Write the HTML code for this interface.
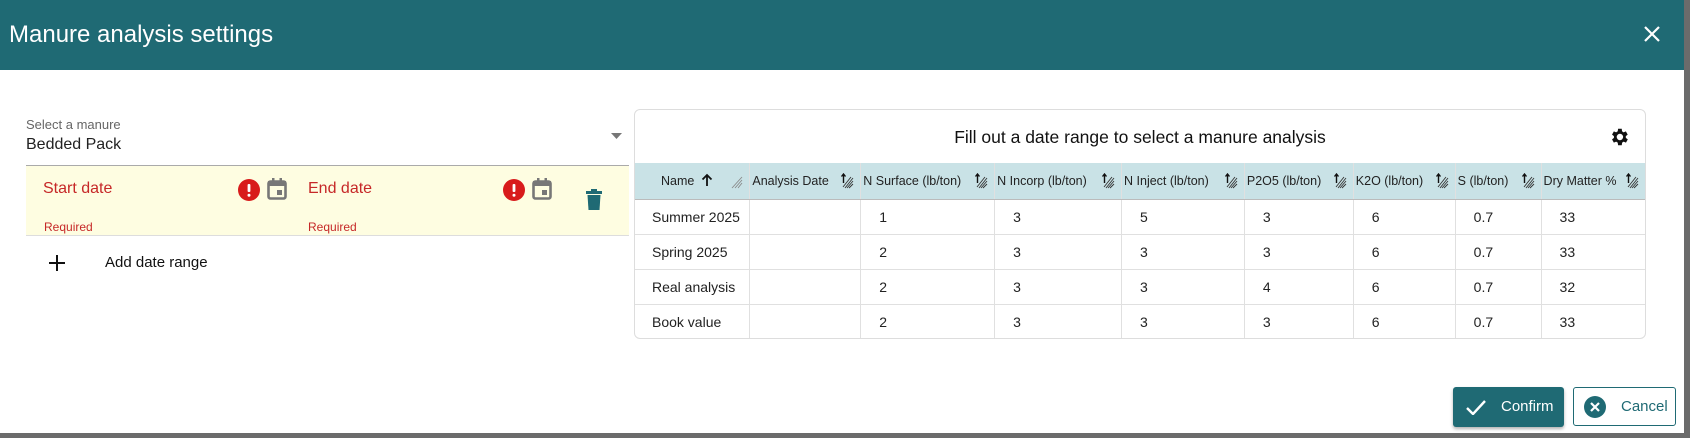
<!DOCTYPE html>
<html><head><style>
*{box-sizing:border-box;margin:0;padding:0}
body{width:1690px;height:438px;background:#6b6b6b;font-family:"Liberation Sans",Arial,sans-serif;position:relative;overflow:hidden}
.dlg{position:absolute;left:0;top:0;width:1684px;height:433px;background:#fff}
.hdr{position:absolute;left:0;top:0;width:1684px;height:70px;background:#1f6a74;color:#fff}
.hdr .t{position:absolute;left:9px;top:21px;font-size:24px}
.abs{position:absolute}
.card{position:absolute;left:634px;top:109px;width:1012px;height:230px;border:1px solid #ddd;border-radius:6px;overflow:hidden}
table{position:absolute;left:0;top:53px;border-collapse:collapse;font-size:14px;color:#222;table-layout:fixed}
th{background:#c9e2e6;height:36px;font-weight:normal;font-size:12.5px;text-align:left;padding-left:2px;border-left:1px solid #e0e0e0;border-bottom:1px solid #bbb;white-space:nowrap;position:relative;vertical-align:middle}
td{height:35px;border-left:1px solid #e0e0e0;border-bottom:1px solid #e0e0e0;padding-left:18px}
th:first-child,td:first-child{border-left:none}
td:first-child{padding-left:17px}
tr:last-child td{border-bottom:none}
.si{position:absolute;right:6px;top:10px;width:14px;height:16px}
</style></head><body>
<svg width="0" height="0" style="position:absolute"><defs>
<g id="srt"><path d="M3.5 1V10M1.5 3.5L3.5 1L5.5 3.5" stroke="#111" stroke-width="1.4" fill="none"/><path d="M5 15L13 5M7 15L13 8M9 15L13 11M3 14L11 4" stroke="#333" stroke-width="0.9"/></g>
<g id="hat"><path d="M3 15L13 4M6 15L13 7M9 15L13 10" stroke="#888" stroke-width="0.9"/></g>
</defs></svg>
<div class="dlg">
<div class="hdr"><div class="t">Manure analysis settings</div>
<svg class="abs" style="left:1643px;top:25px" width="18" height="18" viewBox="0 0 18 18"><path d="M2 2L16 16M16 2L2 16" stroke="#fff" stroke-width="2.2"/></svg></div>

<div class="abs" style="left:26px;top:117px;font-size:13px;color:#666">Select a manure</div>
<div class="abs" style="left:26px;top:136px;font-size:16px;color:#222">Bedded Pack</div>
<svg class="abs" style="left:611px;top:133px" width="11" height="6"><path d="M0 0H11L5.5 6Z" fill="#777"/></svg>
<div class="abs" style="left:26px;top:165px;width:603px;height:1px;background:#aaa"></div>
<div class="abs" style="left:26px;top:166px;width:603px;height:70px;background:#fefde1;border-bottom:1px solid #ddd"></div>
<div class="abs" style="left:43px;top:180px;font-size:16px;color:#c62828">Start date</div>
<div class="abs" style="left:44px;top:220px;font-size:12px;color:#c62828">Required</div>
<div class="abs" style="left:308px;top:180px;font-size:16px;color:#c62828">End date</div>
<div class="abs" style="left:308px;top:220px;font-size:12px;color:#c62828">Required</div>
<svg class="abs" style="left:238px;top:179px" width="22" height="22"><circle cx="11" cy="11" r="11" fill="#d81b1b"/><rect x="9.6" y="5" width="2.8" height="8" rx="1" fill="#fff"/><circle cx="11" cy="16.3" r="1.5" fill="#fff"/></svg>
<svg class="abs" style="left:267px;top:177px" width="20" height="24"><rect x="1.5" y="4.5" width="17" height="17" rx="2" fill="none" stroke="#777" stroke-width="2.6"/><rect x="1" y="4" width="18" height="5" fill="#777"/><rect x="5" y="1" width="2.5" height="4" fill="#777"/><rect x="12.5" y="1" width="2.5" height="4" fill="#777"/><rect x="10" y="13" width="5" height="5" fill="#777"/></svg>
<svg class="abs" style="left:503px;top:179px" width="22" height="22"><circle cx="11" cy="11" r="11" fill="#d81b1b"/><rect x="9.6" y="5" width="2.8" height="8" rx="1" fill="#fff"/><circle cx="11" cy="16.3" r="1.5" fill="#fff"/></svg>
<svg class="abs" style="left:532px;top:177px" width="20" height="24"><rect x="1.5" y="4.5" width="17" height="17" rx="2" fill="none" stroke="#777" stroke-width="2.6"/><rect x="1" y="4" width="18" height="5" fill="#777"/><rect x="5" y="1" width="2.5" height="4" fill="#777"/><rect x="12.5" y="1" width="2.5" height="4" fill="#777"/><rect x="10" y="13" width="5" height="5" fill="#777"/></svg>
<svg class="abs" style="left:586px;top:189px" width="16" height="22"><rect x="0" y="2" width="16" height="3" fill="#1f6a74"/><rect x="5" y="0" width="6" height="3" fill="#1f6a74"/><path d="M1.5 6H14.5L13.5 21H2.5Z" fill="#1f6a74"/></svg>
<svg class="abs" style="left:49px;top:255px" width="16" height="16"><path d="M8 0V16M0 8H16" stroke="#111" stroke-width="2"/></svg>
<div class="abs" style="left:105px;top:254px;font-size:15px;color:#111">Add date range</div>

<div class="card">
<div class="abs" style="left:0;top:17px;width:1010px;text-align:center;font-size:17.5px;color:#111">Fill out a date range to select a manure analysis</div>
<svg class="abs" style="left:973px;top:16px" width="22" height="22" viewBox="0 0 24 24"><path fill="#111" d="M19.4 13a7.5 7.5 0 000-2l2.1-1.6-2-3.5-2.5 1a7 7 0 00-1.7-1L15 3h-4l-.4 2.9a7 7 0 00-1.7 1l-2.5-1-2 3.5L6.5 11a7.5 7.5 0 000 2l-2.1 1.6 2 3.5 2.5-1a7 7 0 001.7 1L11 21h4l.4-2.9a7 7 0 001.7-1l2.5 1 2-3.5zM13 15.5A3.5 3.5 0 1113 8.5a3.5 3.5 0 010 7z"/></svg>
<table>
<colgroup><col style="width:115px"><col style="width:111px"><col style="width:134px"><col style="width:127px"><col style="width:123px"><col style="width:109px"><col style="width:102px"><col style="width:86px"><col style="width:104px"></colgroup>
<tr>
<th style="padding-left:26px">Name <svg width="12" height="14" style="vertical-align:-2px;margin-left:3px"><path d="M6 13V2M1.5 6.5L6 2L10.5 6.5" stroke="#111" stroke-width="1.8" fill="none"/></svg><svg class="si"><use href="#hat"/></svg></th>
<th>Analysis Date <svg class="si"><use href="#srt"/></svg></th>
<th>N Surface (lb/ton) <svg class="si"><use href="#srt"/></svg></th>
<th>N Incorp (lb/ton) <svg class="si"><use href="#srt"/></svg></th>
<th>N Inject (lb/ton) <svg class="si"><use href="#srt"/></svg></th>
<th>P2O5 (lb/ton) <svg class="si"><use href="#srt"/></svg></th>
<th>K2O (lb/ton) <svg class="si"><use href="#srt"/></svg></th>
<th>S (lb/ton) <svg class="si"><use href="#srt"/></svg></th>
<th>Dry Matter % <svg class="si"><use href="#srt"/></svg></th>
</tr>
<tr><td>Summer 2025</td><td></td><td>1</td><td>3</td><td>5</td><td>3</td><td>6</td><td>0.7</td><td>33</td></tr>
<tr><td>Spring 2025</td><td></td><td>2</td><td>3</td><td>3</td><td>3</td><td>6</td><td>0.7</td><td>33</td></tr>
<tr><td>Real analysis</td><td></td><td>2</td><td>3</td><td>3</td><td>4</td><td>6</td><td>0.7</td><td>32</td></tr>
<tr><td>Book value</td><td></td><td>2</td><td>3</td><td>3</td><td>3</td><td>6</td><td>0.7</td><td>33</td></tr>
</table>
</div>

<div class="abs" style="left:1453px;top:387px;width:111px;height:40px;background:#1f6a74;border-radius:3px;box-shadow:0 2px 3px rgba(0,0,0,.3)">
<svg class="abs" style="left:13px;top:13px" width="20" height="15"><path d="M1 8L7 14L19 1" stroke="#fff" stroke-width="2.4" fill="none"/></svg>
<div class="abs" style="left:48px;top:11px;color:#fff;font-size:15px">Confirm</div></div>
<div class="abs" style="left:1573px;top:387px;width:103px;height:39px;border:1px solid #1f6a74;border-radius:3px;background:#fff">
<svg class="abs" style="left:10px;top:8px" width="22" height="22"><circle cx="11" cy="11" r="11" fill="#1f6a74"/><path d="M7 7L15 15M15 7L7 15" stroke="#fff" stroke-width="2.2"/></svg>
<div class="abs" style="left:47px;top:10px;color:#1f6a74;font-size:15px">Cancel</div></div>
</div>
</body></html>
